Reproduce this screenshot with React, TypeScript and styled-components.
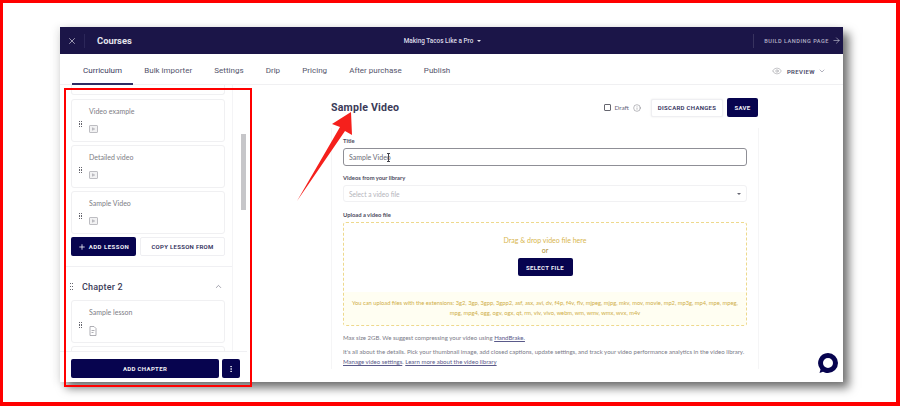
import styled, { createGlobalStyle } from "styled-components";
import { ArrowRight, ChevronDown, ChevronUp, Eye, Info, MoreVertical, Plus, X } from "lucide-react";

const GlobalStyle = createGlobalStyle`
  html, body {
    margin: 0;
    background: #fff;
    font-family: "Lato", "Liberation Sans", sans-serif;
  }
  * { box-sizing: border-box; }
`;

const NAVY = "#1b1548";
const BUTTON = "#07044f";

const Frame = styled.div`
  position: relative;
  width: 900px;
  height: 406px;
  padding: 24px 53px 0 57px;
  border: solid #f00;
  border-width: 3px 4px 4px 3px;
  overflow: hidden;
  background: #fff;
`;

const Window = styled.div`
  position: relative;
  width: 783px;
  height: 355px;
  background: #fff;
  display: flex;
  flex-direction: column;
  box-shadow: 6px 6px 9px rgba(0, 0, 0, 0.55), -3px 0 8px rgba(0, 0, 0, 0.08);
`;

const TopBar = styled.header`
  height: 27px;
  flex: none;
  background: ${NAVY};
  color: #fff;
  display: grid;
  grid-template-columns: 1fr auto 1fr;
  align-items: center;
`;

const TopLeft = styled.div`
  display: flex;
  align-items: center;
  color: #e8e7ef;
`;

const CloseBox = styled.span`
  width: 25px;
  height: 14px;
  display: flex;
  align-items: center;
  justify-content: center;
  border-right: 1px solid #2c2759;
  margin-right: 12px;
`;

const Brand = styled.span`
  font: 700 9.4px "Roboto", sans-serif;
  color: #e6e5ee;
`;

const CourseName = styled.div`
  font: 500 6.4px "Roboto", sans-serif;
  color: #dddce8;
  display: flex;
  align-items: center;
  gap: 4px;
  margin-right: 18px;
`;

const Caret = styled.i`
  width: 0;
  height: 0;
  border: 2px solid transparent;
  border-top: 2.5px solid #e6e5ee;
  border-bottom: 0;
`;

const BuildLink = styled.div`
  justify-self: end;
  height: 14px;
  padding: 0 2px 0 10px;
  display: flex;
  align-items: center;
  gap: 3px;
  border-left: 1px solid #38335f;
  font: 500 5.6px "Roboto", sans-serif;
  letter-spacing: 0.5px;
  color: #b4b2c6;
`;

const TabBar = styled.nav`
  height: 31px;
  flex: none;
  padding: 4px 17px 0 12px;
  display: flex;
  align-items: stretch;
  border-bottom: 1px solid #f0f0f2;
`;

const Tab = styled.span<{ $active?: boolean }>`
  padding: 0 11.1px;
  display: flex;
  align-items: center;
  font: 400 8px "Roboto", sans-serif;
  color: ${(p) => (p.$active ? "#3b3a5c" : "#55556c")};
  border-bottom: 2px solid ${(p) => (p.$active ? "#2f2b63" : "transparent")};
  margin-bottom: -1px;
`;

const Preview = styled.div`
  margin-left: auto;
  display: flex;
  align-items: center;
  gap: 5px;
  font: 600 6px "Roboto", sans-serif;
  letter-spacing: 0.4px;
  color: #4a4a66;
`;

const PreviewChevron = styled(ChevronDown)`
  margin-left: -2px;
`;

const Body = styled.div`
  flex: 1;
  min-height: 0;
  display: flex;
`;

const Sidebar = styled.aside`
  width: 187px;
  flex: none;
  display: flex;
  flex-direction: column;
`;

const SideScroll = styled.div`
  flex: 1;
  min-height: 0;
  display: flex;
  overflow: hidden;
`;

const LessonColumn = styled.div`
  width: 173px;
  padding: 0 7px 0 11px;
  border-right: 1px solid #f4f4f6;
  display: flex;
  flex-direction: column;
  overflow: hidden;
`;

const ScrollTrack = styled.div`
  padding: 49px 0 0 8px;
`;

const ScrollThumb = styled.div`
  width: 5px;
  height: 76px;
  background: #c6c6c9;
`;

const ClippedCard = styled.div`
  height: 10px;
  flex: none;
  margin-bottom: 4px;
  border: 1px solid #f0f0f2;
  border-top: 0;
  border-radius: 0 0 3px 3px;
`;

const LessonCard = styled.div`
  height: 43px;
  flex: none;
  margin-bottom: 3px;
  padding: 7px 0 0 7px;
  display: flex;
  align-items: center;
  gap: 5px;
  border: 1px solid #f0f0f2;
  border-radius: 3px;
  overflow: hidden;
`;

const LessonInfo = styled.div`
  align-self: flex-start;
  display: flex;
  flex-direction: column;
  gap: 10px;
  font: 400 7px "Lato", sans-serif;
  color: #7d7d85;
`;

const Grip = styled.span`
  width: 5px;
  flex: none;
  display: flex;
  flex-direction: column;
  gap: 1.6px;
  & > i {
    height: 1.2px;
    width: 4px;
    background-image: linear-gradient(90deg, #66666f 1.2px, transparent 1.2px, transparent 2.2px, #66666f 2.2px, #66666f 3.4px, transparent 3.4px);
  }
`;

const LessonButtons = styled.div`
  display: flex;
  gap: 4px;
  flex: none;
`;

const PrimaryButton = styled.button<{ $grow?: boolean }>`
  height: 19px;
  flex: ${(p) => (p.$grow ? 1 : "none")};
  padding: 0 10px;
  display: flex;
  align-items: center;
  justify-content: center;
  gap: 3px;
  border: 0;
  border-radius: 2px;
  background: ${BUTTON};
  color: #f0f0f6;
  font: 700 6px "Roboto", sans-serif;
  letter-spacing: 0.35px;
`;

const AddLesson = styled(PrimaryButton)`
  width: 65px;
  padding: 0;
  letter-spacing: 0.5px;
`;

const GhostButton = styled.button`
  height: 19px;
  padding: 0;
  display: flex;
  align-items: center;
  justify-content: center;
  border: 1px solid #efeff2;
  border-radius: 2px;
  background: #fff;
  color: #2e2d58;
  font: 600 6px "Roboto", sans-serif;
  letter-spacing: 0.3px;
`;

const CopyLesson = styled(GhostButton)`
  flex: 1;
`;

const ChapterDivider = styled.div`
  height: 1px;
  flex: none;
  margin: 10px -7px 0 -7px;
  background: #f0f0f3;
`;

const ChapterRow = styled.div`
  height: 33px;
  flex: none;
  padding-top: 6px;
  display: flex;
  align-items: center;
  gap: 7px;
  margin-left: -1px;
  font: 500 9px "Roboto", sans-serif;
  letter-spacing: 0.2px;
  color: #3d3d5a;
`;

const ChapterChevron = styled.span`
  margin-left: auto;
  margin-right: 2px;
  display: flex;
  color: #555568;
`;

const SideFooter = styled.div`
  height: 31px;
  flex: none;
  padding: 7px 7px 0 11px;
  display: flex;
  gap: 3px;
  border-top: 1px solid #f0f0f3;
`;

const MoreButton = styled(PrimaryButton)`
  width: 18px;
  padding: 0;
`;

const Main = styled.main`
  flex: 1;
  min-width: 0;
  padding: 13px 0 0 84px;
`;

const MainHead = styled.div`
  width: 427px;
  height: 19px;
  display: flex;
  align-items: center;
`;

const PageTitle = styled.h1`
  margin: 0 0 1px;
  font: 700 10.6px "Roboto", sans-serif;
  letter-spacing: 0.2px;
  color: #3a3a58;
`;

const DraftGroup = styled.div`
  margin-left: auto;
  display: flex;
  align-items: center;
  gap: 4px;
  margin-right: 10px;
  font: 400 6.4px "Lato", sans-serif;
  color: #66667a;
`;

const CheckBox = styled.span`
  width: 7px;
  height: 7px;
  margin-right: -1px;
  border: 1px solid #66666f;
  border-radius: 1px;
`;

const Discard = styled(GhostButton)`
  width: 72px;
  height: 18px;
  margin-right: 4px;
  box-shadow: 0 0 2px rgba(0, 0, 0, 0.1);
`;

const Save = styled(PrimaryButton)`
  width: 31px;
  padding: 0;
`;

const Panel = styled.section`
  width: 428px;
  height: 241px;
  margin-top: 11px;
  padding: 8px 11px 0 11px;
  border-left: 1px solid #f5f5f6;
  border-right: 1px solid #f5f5f6;
`;

const FieldLabel = styled.label`
  display: block;
  height: 10px;
  font: 700 5.8px/10px "Lato", sans-serif;
  color: #4b4b60;
`;

const TitleInput = styled.div`
  position: relative;
  height: 18px;
  margin: 2px 0 7px;
  padding-left: 5px;
  display: flex;
  align-items: center;
  border: 1px solid #8f8f96;
  border-radius: 3px;
  font: 400 7px "Lato", sans-serif;
  color: #6d6d78;
`;

const MouseBeam = styled.span`
  position: absolute;
  left: 43px;
  top: 4px;
  width: 3px;
  height: 9px;
  border: solid #44444c;
  border-width: 1px 0;
  background: linear-gradient(90deg, transparent 1px, #44444c 1px, #44444c 2px, transparent 2px);
`;

const SelectBox = styled.div`
  height: 17px;
  margin: 2px 0 8px;
  padding: 0 5px;
  display: flex;
  align-items: center;
  justify-content: space-between;
  border: 1px solid #f1f1f3;
  border-radius: 3px;
  font: 400 6.6px "Lato", sans-serif;
  color: #b4b4bb;
`;

const SelectCaret = styled(Caret)`
  border-top-color: #666672;
`;

const DropZone = styled.div`
  height: 104px;
  margin-top: 2px;
  display: flex;
  flex-direction: column;
  border: 1px dashed #eed98c;
  border-radius: 3px;
`;

const DropTop = styled.div`
  height: 69px;
  flex: none;
  padding-top: 12px;
  display: flex;
  flex-direction: column;
  align-items: center;
  font: 400 7px/10px "Lato", sans-serif;
  color: #d8b64e;
`;

const OrText = styled.span`
  color: #a98a2c;
`;

const SelectFile = styled(PrimaryButton)`
  width: 55px;
  height: 18px;
  margin-top: 3px;
  padding: 0;
`;

const DropHint = styled.div`
  flex: 1;
  padding: 6px 8px 0;
  background: #fffef2;
  text-align: center;
  font: 400 5.75px/10px "Lato", sans-serif;
  color: #cfae48;
`;

const HelpText = styled.p`
  margin: 0;
  font: 400 6.05px/10px "Lato", sans-serif;
  color: #7b7b88;
`;

const SizeText = styled(HelpText)`
  margin: 7px 0 4px;
`;

const HelpLink = styled.a`
  color: #5a5a8a;
  text-decoration: underline;
`;

const ChatBubble = styled.svg`
  position: absolute;
  right: 4px;
  bottom: 8px;
`;

const AnnotationBox = styled.div`
  position: absolute;
  left: 61px;
  top: 85px;
  width: 188px;
  height: 299px;
  border: 2px solid #f00;
  pointer-events: none;
`;

const AnnotationArrow = styled.svg`
  position: absolute;
  left: 287px;
  top: 103px;
`;

const lessons = [
  { name: "Video example", kind: "video" },
  { name: "Detailed video", kind: "video" },
  { name: "Sample Video", kind: "video" },
];

const tabs = ["Curriculum", "Bulk importer", "Settings", "Drip", "Pricing", "After purchase", "Publish"];

function GripDots() {
  return (
    <Grip>
      <i />
      <i />
      <i />
    </Grip>
  );
}

function LessonIcon({ kind }: { kind: string }) {
  if (kind === "doc") {
    return (
      <svg width="8" height="10" viewBox="0 0 8 10" fill="none" stroke="#9a9aa2" strokeWidth="0.8">
        <path d="M1 .5h4l2 2v7H1z" />
        <path d="M2.500 4.500h3M2.500 6.500h2" />
      </svg>
    );
  }
  return (
    <svg width="9" height="8" viewBox="0 0 9 8" fill="#f2f2f3" stroke="#a3a3aa" strokeWidth="0.7">
      <rect x=".5" y=".5" width="8" height="7" rx=".6" />
      <path d="M3.500 2.800 5.600 4 3.500 5.200z" />
    </svg>
  );
}

function Lesson({ name, kind }: { name: string; kind: string }) {
  return (
    <LessonCard>
      <GripDots />
      <LessonInfo>
        {name}
        <LessonIcon kind={kind} />
      </LessonInfo>
    </LessonCard>
  );
}

export default function App() {
  return (
    <>
      <GlobalStyle />
      <Frame>
        <Window>
          <TopBar>
            <TopLeft>
              <CloseBox>
                <X size={10} strokeWidth={1.5} />
              </CloseBox>
              <Brand>Courses</Brand>
            </TopLeft>
            <CourseName>
              Making Tacos Like a Pro <Caret />
            </CourseName>
            <BuildLink>
              BUILD LANDING PAGE <ArrowRight size={9} strokeWidth={1.5} color="#d6d5e0" />
            </BuildLink>
          </TopBar>
          <TabBar>
            {tabs.map((tab, i) => (
              <Tab key={tab} $active={i === 0}>
                {tab}
              </Tab>
            ))}
            <Preview>
              <Eye size={10} strokeWidth={1} color="#77777f" />
              PREVIEW
              <PreviewChevron size={8} strokeWidth={1.3} />
            </Preview>
          </TabBar>
          <Body>
            <Sidebar>
              <SideScroll>
                <LessonColumn>
                  <ClippedCard />
                  {lessons.map((l) => (
                    <Lesson key={l.name} name={l.name} kind={l.kind} />
                  ))}
                  <LessonButtons>
                    <AddLesson>
                      <Plus size={8} strokeWidth={2.5} /> ADD LESSON
                    </AddLesson>
                    <CopyLesson>COPY LESSON FROM</CopyLesson>
                  </LessonButtons>
                  <ChapterDivider />
                  <ChapterRow>
                    <GripDots />
                    Chapter 2
                    <ChapterChevron>
                      <ChevronUp size={9} strokeWidth={1.4} />
                    </ChapterChevron>
                  </ChapterRow>
                  <Lesson name="Sample lesson" kind="doc" />
                  <LessonCard />
                </LessonColumn>
                <ScrollTrack>
                  <ScrollThumb />
                </ScrollTrack>
              </SideScroll>
              <SideFooter>
                <PrimaryButton $grow>ADD CHAPTER</PrimaryButton>
                <MoreButton>
                  <MoreVertical size={8} strokeWidth={2.5} />
                </MoreButton>
              </SideFooter>
            </Sidebar>
            <Main>
              <MainHead>
                <PageTitle>Sample Video</PageTitle>
                <DraftGroup>
                  <CheckBox />
                  Draft
                  <Info size={8} strokeWidth={1.2} color="#55555f" />
                </DraftGroup>
                <Discard>DISCARD CHANGES</Discard>
                <Save>SAVE</Save>
              </MainHead>
              <Panel>
                <FieldLabel>Title</FieldLabel>
                <TitleInput>
                  Sample Video
                  <MouseBeam />
                </TitleInput>
                <FieldLabel>Videos from your library</FieldLabel>
                <SelectBox>
                  Select a video file
                  <SelectCaret />
                </SelectBox>
                <FieldLabel>Upload a video file</FieldLabel>
                <DropZone>
                  <DropTop>
                    Drag &amp; drop video file here
                    <OrText>or</OrText>
                    <SelectFile>SELECT FILE</SelectFile>
                  </DropTop>
                  <DropHint>
                    You can upload files with the extensions: 3g2, 3gp, 3gpp, 3gpp2, asf, asx, avi, dv, f4p, f4v, flv, mjpeg, mjpg, mkv, mov, movie, mp2, mp3g, mp4, mpe, mpeg, mpg, mpg4, ogg, ogv, ogx, qt, rm, viv, vivo, webm, wm, wmv, wmx, wvx, m4v
                  </DropHint>
                </DropZone>
                <SizeText>
                  Max size 2GB. We suggest compressing your video using <HelpLink>HandBrake.</HelpLink>
                </SizeText>
                <HelpText>
                  It's all about the details. Pick your thumbnail image, add closed captions, update settings, and track your video performance analytics in the video library.
                  <br />
                  <HelpLink>Manage video settings</HelpLink>. <HelpLink>Learn more about the video library</HelpLink>
                </HelpText>
              </Panel>
            </Main>
          </Body>
          <ChatBubble width="22" height="22" viewBox="0 0 22 22">
            <path
              fillRule="evenodd"
              fill={BUTTON}
              d="M11 1a10 10 0 0 1 0 20c-2 0-3.500-.3-5-1.200L2.500 21l1-3.600A10 10 0 0 1 11 1zm0 5a5 5 0 0 0 0 10 5 5 0 0 0 0-10z"
            />
          </ChatBubble>
        </Window>
        <AnnotationBox />
        <AnnotationArrow width="70" height="100" viewBox="0 0 70 100">
          <polygon points="7,95 50,21 42,18 61,6 62,29 55,25" fill="#f5201c" />
        </AnnotationArrow>
      </Frame>
    </>
  );
}
